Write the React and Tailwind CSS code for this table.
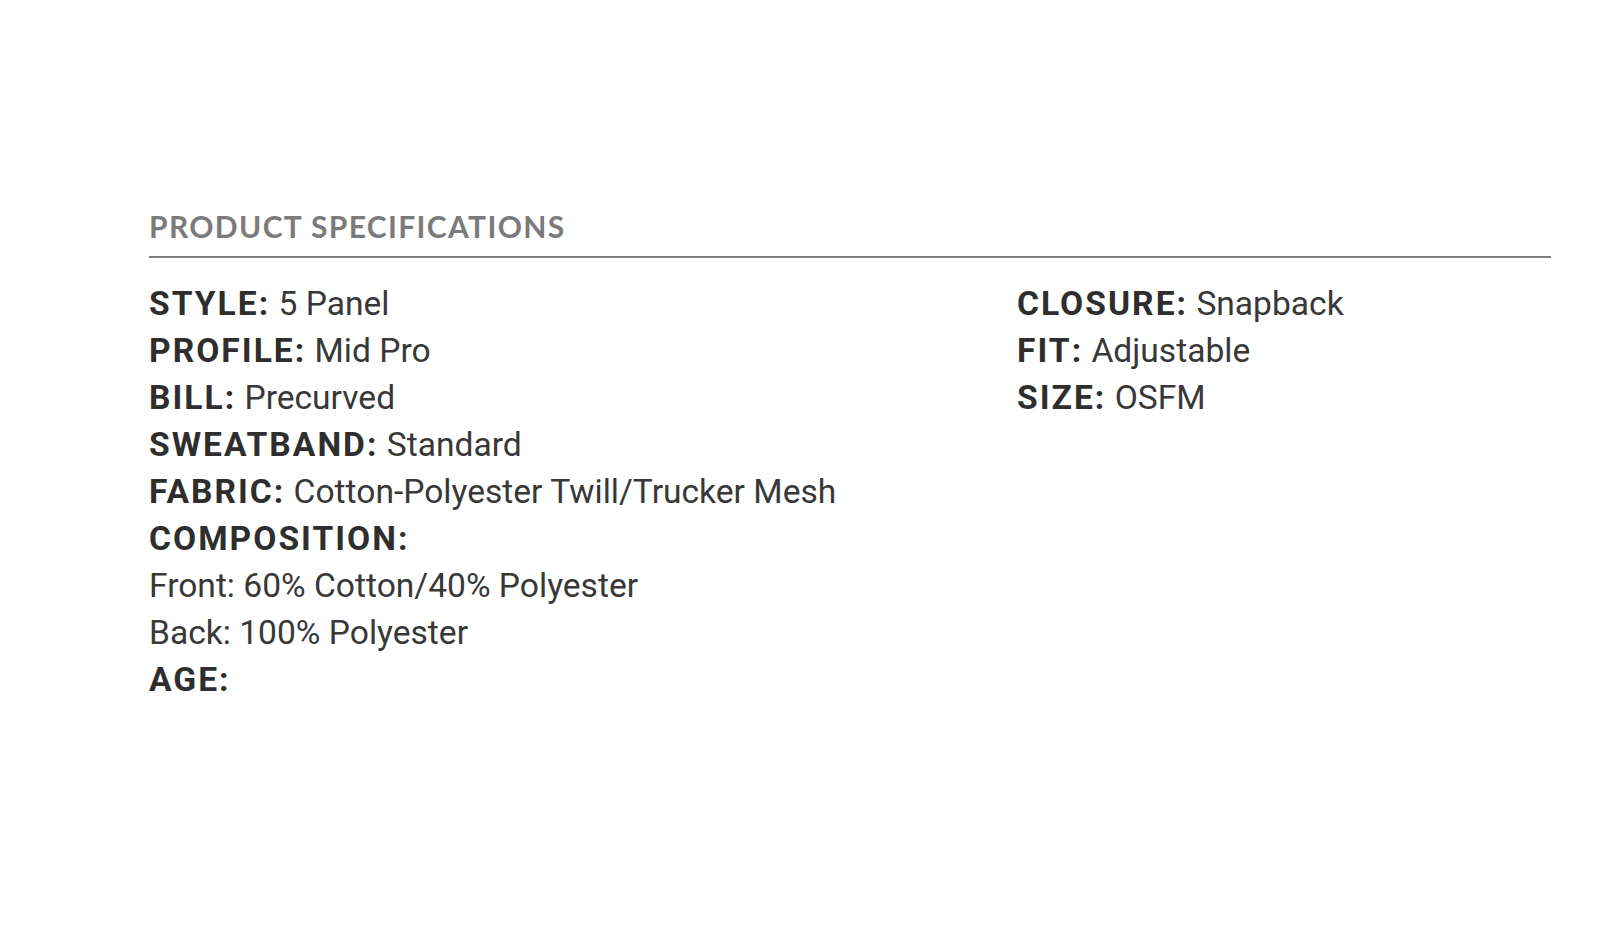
import React from 'react';

const leftSpecs = [
  { label: 'STYLE:', value: '5 Panel' },
  { label: 'PROFILE:', value: 'Mid Pro' },
  { label: 'BILL:', value: 'Precurved' },
  { label: 'SWEATBAND:', value: 'Standard' },
  { label: 'FABRIC:', value: 'Cotton-Polyester Twill/Trucker Mesh' },
];

const rightSpecs = [
  { label: 'CLOSURE:', value: 'Snapback' },
  { label: 'FIT:', value: 'Adjustable' },
  { label: 'SIZE:', value: 'OSFM' },
];

const SpecRow = ({ label, value }) => (
  <div className="h-[47px] leading-[47px] whitespace-nowrap">
    <span className="font-bold tracking-[0.06em] text-[#2e2e2e]">{label}</span>
    {value && <span className="text-[#383838]"> {value}</span>}
  </div>
);

const App = () => {
  return (
    <div className="min-h-[940px] bg-white pt-[211px] pl-[149px] pr-[49px]">
      {/* Heading */}
      <h2 className="text-[30px] leading-[30px] font-bold text-[#7b7b7b] tracking-[0.045em] font-['Lato',sans-serif]">
        PRODUCT SPECIFICATIONS
      </h2>
      <div className="mt-[15px] h-[2px] bg-[#7d7d7d]" />

      {/* Specs */}
      <div className="mt-[22px] grid grid-cols-[868px_1fr] text-[33.6px] font-['Roboto',sans-serif]">
        <div>
          {leftSpecs.map(spec => (
            <SpecRow key={spec.label} label={spec.label} value={spec.value} />
          ))}
          <SpecRow label="COMPOSITION:" />
          <div className="h-[47px] leading-[47px] text-[#383838]">Front: 60% Cotton/40% Polyester</div>
          <div className="h-[47px] leading-[47px] text-[#383838]">Back: 100% Polyester</div>
          <SpecRow label="AGE:" />
        </div>
        <div>
          {rightSpecs.map(spec => (
            <SpecRow key={spec.label} label={spec.label} value={spec.value} />
          ))}
        </div>
      </div>
    </div>
  );
};

export default App;
